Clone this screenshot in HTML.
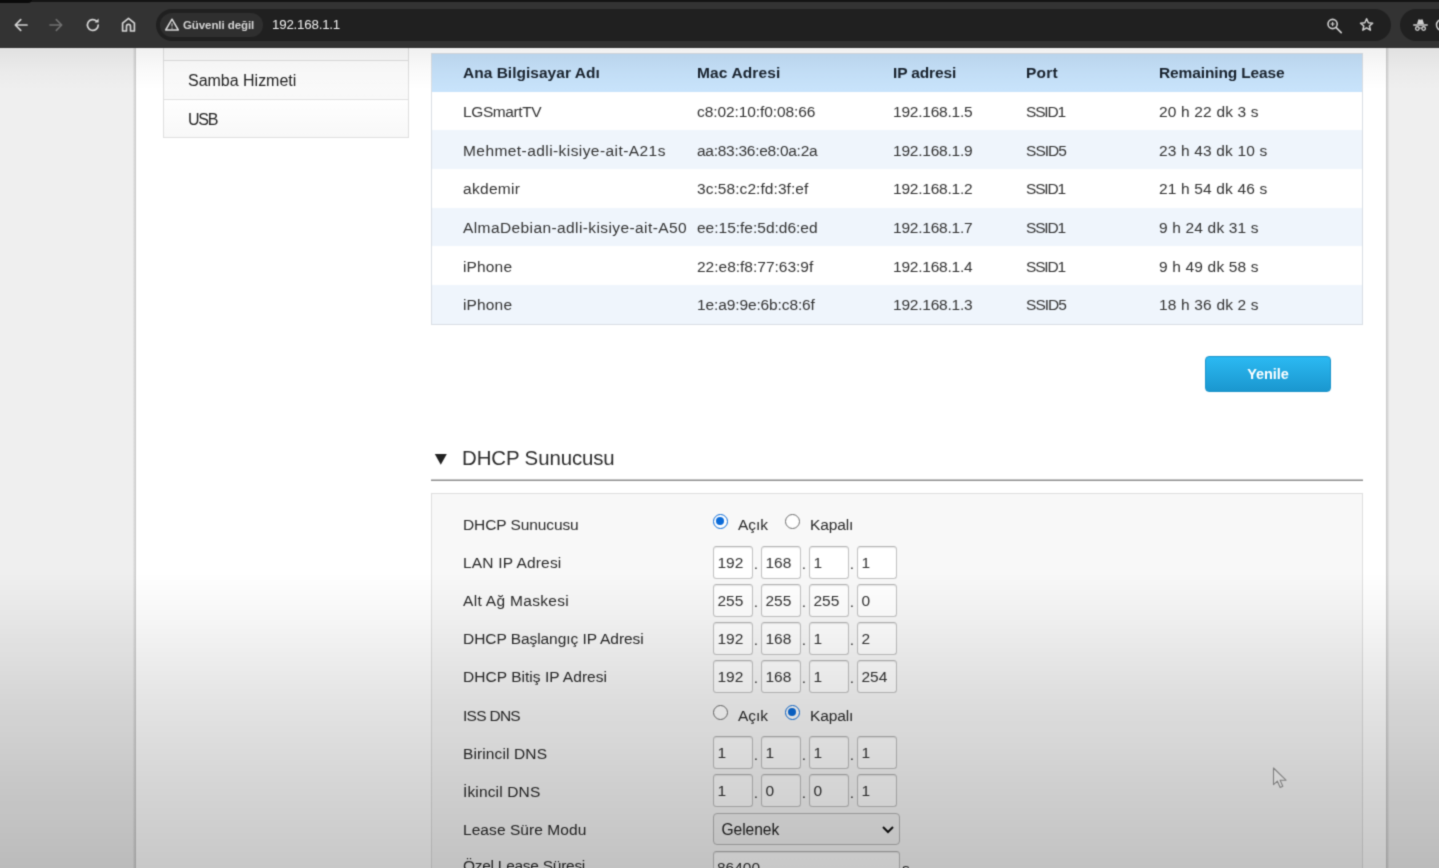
<!DOCTYPE html>
<html lang="tr">
<head>
<meta charset="utf-8">
<title>192.168.1.1</title>
<style>
*{box-sizing:border-box;margin:0;padding:0}
html,body{width:1439px;height:868px;overflow:hidden}
body{position:relative;background:#efefef;font-family:"Liberation Sans",sans-serif;color:#333;font-size:15.5px}
.abs{position:absolute}
#w{position:absolute;left:0;top:0;width:1439px;height:868px;filter:url(#soft)}
/* browser chrome */
#chrome{left:-8px;top:-8px;width:1455px;height:56px;background:#333333}
#tabstrip{left:-8px;top:-8px;width:1455px;height:10px;background:#141414}
#urlbar{left:156px;top:9px;width:1235px;height:32px;border-radius:16px;background:#202020}
#chip{left:160px;top:13px;width:103px;height:24px;border-radius:12px;background:#2f2f2f}
#chiptxt{left:183px;top:18px;font-size:11.5px;font-weight:bold;color:#d4d4d4;white-space:nowrap;line-height:14px}
#url{left:272px;top:17px;font-size:13.3px;color:#f0f0f0;white-space:nowrap;line-height:16px}
#incog{left:1400px;top:9px;width:60px;height:32px;border-radius:16px;background:#202020}
/* page */
#page{left:-8px;top:48px;width:1455px;height:830px;background:#efefef}
#container{left:133px;top:48px;width:1256px;height:830px;background:#fff;border-left:3px solid transparent;border-right:3px solid transparent;border-image:linear-gradient(to right,#e9e9e9 0,#c6c6c6 3px,#fff 3px,#fff calc(100% - 3px),#c6c6c6 calc(100% - 3px),#e9e9e9 100%) 0 3 0 3}
#topsh{left:-8px;top:48px;width:1455px;height:42px;background:linear-gradient(rgba(0,0,0,.06),rgba(0,0,0,.02) 55%,rgba(0,0,0,0));pointer-events:none}
#side{left:163px;top:48px;width:246px;height:90px;border:1px solid #dfdfdf;border-top:none;background:#fbfbfb}
.sitem{position:absolute;left:0;width:244px;height:38px;border-top:1px solid #dfdfdf;font-size:16px;color:#222;line-height:40px;padding-left:24px;background:linear-gradient(#fefefe,#f8f8f8)}
/* table */
#tbl{left:431px;top:53px;width:932px;height:272px;border:1px solid #d9dee4;background:#fff}
.tr{position:absolute;left:0;width:930px;height:38.6px}
.tr span{position:absolute;top:1.4px;white-space:nowrap;line-height:38.6px}
.th{background:linear-gradient(#c3dff8,#c8e3fb);font-weight:bold;color:#19232e;height:37.6px!important}
.th span{top:-0.4px!important;line-height:37.6px!important}
.alt{background:#eff5fc}
.c1{left:31px}.c2{left:265px}.c3{left:461px}.c4{left:594px}.c5{left:727px}
#btn{left:1205px;top:356px;width:126px;height:36px;border-radius:4px;background:linear-gradient(#2bb9f2,#1a97cf);border:1px solid #1a94cb;color:#fff;font-weight:bold;font-size:14.5px;text-align:center;line-height:34px}
#tri{left:434px;top:453px}
#h2{left:462px;top:444.5px;font-size:20.4px;color:#2c2c2c;line-height:26px;white-space:nowrap}
#sep{left:431px;top:479px;width:932px;height:2px;background:linear-gradient(#c4c4c4 50%,#8e8e8e 50%)}
#form{left:431px;top:493px;width:932px;height:400px;border:1px solid #dedede;background:#f8f8f8}
.lbl{position:absolute;left:463px;white-space:nowrap;line-height:20px;color:#2a2a2a}
.ip{position:absolute;width:40px;height:33px;border:1px solid #c2c2c2;border-top-color:#b4b4b4;border-radius:3.5px;background:#fff;box-shadow:inset 0 1px 1px rgba(0,0,0,.09);padding-left:3.5px;line-height:31px;color:#333}
.dot{position:absolute;width:6px;text-align:center;line-height:20px}
.radio{position:absolute;width:15px;height:15px;border-radius:50%;border:1.3px solid #6e6e6e;background:#fff}
.radio.on{border-color:#0b6bd8}
.radio.on::after{content:"";position:absolute;left:2.2px;top:2.2px;width:8px;height:8px;border-radius:50%;background:#0b6bd8}
.rl{position:absolute;white-space:nowrap;line-height:20px;color:#2a2a2a}
#sel{left:713px;top:813px;width:187px;height:32px;border:1px solid #b9b9b9;border-radius:4px;background:#f4f4f4;padding-left:7.5px;line-height:31.5px;font-size:15.6px;color:#222}
#inp{left:713px;top:851px;width:187px;height:33px;border:1px solid #c2c2c2;border-top-color:#b4b4b4;border-radius:3.5px;background:#fff;box-shadow:inset 0 1px 1px rgba(0,0,0,.09);padding-left:3px;line-height:31px}
#ov{left:-8px;top:572px;width:1455px;height:306px;background:linear-gradient(to bottom,rgba(0,0,0,0) 0px,rgba(0,0,0,.03) 41px,rgba(0,0,0,.10) 124px,rgba(0,0,0,.16) 207px,rgba(0,0,0,.215) 296px,rgba(0,0,0,.22) 306px);pointer-events:none}
</style>
</head>
<body>
<svg width="0" height="0" style="position:absolute"><defs><filter id="soft" x="0" y="0" width="100%" height="100%" color-interpolation-filters="sRGB"><feConvolveMatrix order="3" kernelMatrix="1 4 1 4 16 4 1 4 1" divisor="36" edgeMode="duplicate" preserveAlpha="true"/></filter></defs></svg>
<div id="w">
<div id="page" class="abs"></div>
<div id="container" class="abs"></div>

<div id="side" class="abs">
  <div class="sitem" style="top:12px;letter-spacing:-0.015px">Samba Hizmeti</div>
  <div class="sitem" style="top:51px;letter-spacing:-1.200px">USB</div>
</div>

<div id="tbl" class="abs">
  <div class="tr th" style="top:0"><span class="c1" style="letter-spacing:0.018px">Ana Bilgisayar Adı</span><span class="c2" style="letter-spacing:0.131px">Mac Adresi</span><span class="c3" style="letter-spacing:-0.143px">IP adresi</span><span class="c4" style="letter-spacing:0.233px">Port</span><span class="c5" style="letter-spacing:-0.129px">Remaining Lease</span></div>
  <div class="tr" style="top:37.6px;height:38.7px"><span class="c1" style="letter-spacing:-0.391px">LGSmartTV</span><span class="c2" style="letter-spacing:-0.087px">c8:02:10:f0:08:66</span><span class="c3" style="letter-spacing:-0.219px">192.168.1.5</span><span class="c4" style="letter-spacing:-1.178px">SSID1</span><span class="c5" style="letter-spacing:0.171px">20 h 22 dk 3 s</span></div>
  <div class="tr alt" style="top:76.3px;height:38.7px"><span class="c1" style="letter-spacing:0.429px">Mehmet-adli-kisiye-ait-A21s</span><span class="c2" style="letter-spacing:-0.274px">aa:83:36:e8:0a:2a</span><span class="c3" style="letter-spacing:-0.219px">192.168.1.9</span><span class="c4" style="letter-spacing:-0.953px">SSID5</span><span class="c5" style="letter-spacing:0.164px">23 h 43 dk 10 s</span></div>
  <div class="tr" style="top:115.0px;height:38.7px"><span class="c1" style="letter-spacing:0.310px">akdemir</span><span class="c2" style="letter-spacing:0.063px">3c:58:c2:fd:3f:ef</span><span class="c3" style="letter-spacing:-0.219px">192.168.1.2</span><span class="c4" style="letter-spacing:-1.178px">SSID1</span><span class="c5" style="letter-spacing:0.164px">21 h 54 dk 46 s</span></div>
  <div class="tr alt" style="top:153.7px;height:38.7px"><span class="c1" style="letter-spacing:0.403px">AlmaDebian-adli-kisiye-ait-A50</span><span class="c2" style="letter-spacing:-0.004px">ee:15:fe:5d:d6:ed</span><span class="c3" style="letter-spacing:-0.219px">192.168.1.7</span><span class="c4" style="letter-spacing:-1.178px">SSID1</span><span class="c5" style="letter-spacing:0.171px">9 h 24 dk 31 s</span></div>
  <div class="tr" style="top:192.4px;height:38.7px"><span class="c1" style="letter-spacing:0.147px">iPhone</span><span class="c2" style="letter-spacing:-0.004px">22:e8:f8:77:63:9f</span><span class="c3" style="letter-spacing:-0.219px">192.168.1.4</span><span class="c4" style="letter-spacing:-1.178px">SSID1</span><span class="c5" style="letter-spacing:0.171px">9 h 49 dk 58 s</span></div>
  <div class="tr alt" style="top:231.1px;height:38.7px"><span class="c1" style="letter-spacing:0.147px">iPhone</span><span class="c2" style="letter-spacing:-0.119px">1e:a9:9e:6b:c8:6f</span><span class="c3" style="letter-spacing:-0.219px">192.168.1.3</span><span class="c4" style="letter-spacing:-0.953px">SSID5</span><span class="c5" style="letter-spacing:0.171px">18 h 36 dk 2 s</span></div>
</div>

<div id="btn" class="abs" style="letter-spacing:-0.044px">Yenile</div>

<svg id="tri" class="abs" width="14" height="13" viewBox="0 0 14 13"><path d="M0.8 1h12l-6 10.800z" fill="#222"/></svg>
<div id="h2" class="abs" style="letter-spacing:-0.090px">DHCP Sunucusu</div>
<div id="sep" class="abs"></div>
<div id="form" class="abs"></div>
<div class="lbl" style="top:515.0px;letter-spacing:-0.099px">DHCP Sunucusu</div>
<div class="radio on" style="left:713px;top:514.0px"></div>
<div class="rl" style="left:738px;top:515.0px;letter-spacing:-0.052px">Açık</div>
<div class="radio" style="left:785px;top:514.0px"></div>
<div class="rl" style="left:810px;top:515.0px;letter-spacing:-0.131px">Kapalı</div>
<div class="lbl" style="top:553.1px;letter-spacing:0.173px">LAN IP Adresi</div>
<div class="ip" style="left:713px;top:545.6px">192</div>
<div class="dot" style="left:753px;top:554.1px">.</div>
<div class="ip" style="left:761px;top:545.6px">168</div>
<div class="dot" style="left:801px;top:554.1px">.</div>
<div class="ip" style="left:809px;top:545.6px">1</div>
<div class="dot" style="left:849px;top:554.1px">.</div>
<div class="ip" style="left:857px;top:545.6px">1</div>
<div class="lbl" style="top:591.2px;letter-spacing:0.311px">Alt Ağ Maskesi</div>
<div class="ip" style="left:713px;top:583.7px">255</div>
<div class="dot" style="left:753px;top:592.2px">.</div>
<div class="ip" style="left:761px;top:583.7px">255</div>
<div class="dot" style="left:801px;top:592.2px">.</div>
<div class="ip" style="left:809px;top:583.7px">255</div>
<div class="dot" style="left:849px;top:592.2px">.</div>
<div class="ip" style="left:857px;top:583.7px">0</div>
<div class="lbl" style="top:629.3px;letter-spacing:-0.060px">DHCP Başlangıç IP Adresi</div>
<div class="ip" style="left:713px;top:621.8px">192</div>
<div class="dot" style="left:753px;top:630.3px">.</div>
<div class="ip" style="left:761px;top:621.8px">168</div>
<div class="dot" style="left:801px;top:630.3px">.</div>
<div class="ip" style="left:809px;top:621.8px">1</div>
<div class="dot" style="left:849px;top:630.3px">.</div>
<div class="ip" style="left:857px;top:621.8px">2</div>
<div class="lbl" style="top:667.4px;letter-spacing:0.037px">DHCP Bitiş IP Adresi</div>
<div class="ip" style="left:713px;top:659.9px">192</div>
<div class="dot" style="left:753px;top:668.4px">.</div>
<div class="ip" style="left:761px;top:659.9px">168</div>
<div class="dot" style="left:801px;top:668.4px">.</div>
<div class="ip" style="left:809px;top:659.9px">1</div>
<div class="dot" style="left:849px;top:668.4px">.</div>
<div class="ip" style="left:857px;top:659.9px">254</div>
<div class="lbl" style="top:705.5px;letter-spacing:-0.719px">ISS DNS</div>
<div class="radio" style="left:713px;top:704.5px"></div>
<div class="rl" style="left:738px;top:705.5px;letter-spacing:-0.052px">Açık</div>
<div class="radio on" style="left:785px;top:704.5px"></div>
<div class="rl" style="left:810px;top:705.5px;letter-spacing:-0.131px">Kapalı</div>
<div class="lbl" style="top:743.6px;letter-spacing:0.119px">Birincil DNS</div>
<div class="ip" style="left:713px;top:736.1px">1</div>
<div class="dot" style="left:753px;top:744.6px">.</div>
<div class="ip" style="left:761px;top:736.1px">1</div>
<div class="dot" style="left:801px;top:744.6px">.</div>
<div class="ip" style="left:809px;top:736.1px">1</div>
<div class="dot" style="left:849px;top:744.6px">.</div>
<div class="ip" style="left:857px;top:736.1px">1</div>
<div class="lbl" style="top:781.7px;letter-spacing:0.150px">İkincil DNS</div>
<div class="ip" style="left:713px;top:774.2px">1</div>
<div class="dot" style="left:753px;top:782.7px">.</div>
<div class="ip" style="left:761px;top:774.2px">0</div>
<div class="dot" style="left:801px;top:782.7px">.</div>
<div class="ip" style="left:809px;top:774.2px">0</div>
<div class="dot" style="left:849px;top:782.7px">.</div>
<div class="ip" style="left:857px;top:774.2px">1</div>
<div class="lbl" style="top:819.8px;letter-spacing:0.067px">Lease Süre Modu</div>
<div id="sel" class="abs"><span style="letter-spacing:-0.066px">Gelenek</span><svg class="abs" style="right:5px;top:11.5px" width="12" height="8" viewBox="0 0 12 8"><path d="M1 1l5 5 5-5" fill="none" stroke="#111" stroke-width="2"/></svg></div>
<div class="lbl" style="top:856.4px;letter-spacing:-0.272px">Özel Lease Süresi</div>
<div id="inp" class="abs">86400</div>
<div class="rl" style="left:902px;top:858.9px">s</div>

<svg class="abs" style="left:1268px;top:762px" width="24" height="30" viewBox="0 0 24 30"><path d="M5.500 6V22.600L9.400 19.200 12.200 25.500 14.800 24.300 12.100 18.200H18z" fill="#fdfdfd" stroke="#999" stroke-width="1.100" stroke-linejoin="round"/></svg>
<div id="topsh" class="abs"></div>
<div id="ov" class="abs"></div>

<div id="chrome" class="abs"></div>
<div id="tabstrip" class="abs"></div>
<div class="abs" style="left:-8px;top:-8px;width:40px;height:11px;background:#0a0a0a;border-radius:0 0 4px 0"></div>
<div id="urlbar" class="abs"></div>
<div id="chip" class="abs"></div>
<div id="chiptxt" class="abs" style="letter-spacing:-0.085px">Güvenli değil</div>
<div id="url" class="abs" style="letter-spacing:-0.199px">192.168.1.1</div>
<div id="incog" class="abs"></div>
<svg class="abs" style="left:12px;top:16px" width="18" height="18" viewBox="0 0 18 18"><path d="M15 9H3.5M8.7 3.6L3.3 9l5.4 5.4" fill="none" stroke="#d4d4d4" stroke-width="1.7" stroke-linecap="round" stroke-linejoin="round"/></svg>
<svg class="abs" style="left:47px;top:16px" width="18" height="18" viewBox="0 0 18 18"><path d="M3 9h11.5M9.3 3.6L14.7 9l-5.4 5.4" fill="none" stroke="#707070" stroke-width="1.6" stroke-linecap="round" stroke-linejoin="round"/></svg>
<svg class="abs" style="left:84px;top:16px" width="18" height="18" viewBox="0 0 18 18"><path d="M14.2 9a5.4 5.4 0 1 1-1.7-3.9" fill="none" stroke="#d4d4d4" stroke-width="1.7" stroke-linecap="round"/><path d="M14.6 2.6v4h-4z" fill="#d4d4d4"/></svg>
<svg class="abs" style="left:119px;top:15px" width="19" height="19" viewBox="0 0 19 19"><path d="M3.6 16V8.2L9.5 3.4l5.9 4.8V16h-3.9v-4.6a2 2 0 0 0-4 0V16z" fill="none" stroke="#d4d4d4" stroke-width="1.7" stroke-linejoin="round"/></svg>
<svg class="abs" style="left:164px;top:17px" width="16" height="15" viewBox="0 0 16 15"><path d="M8 2.2L14.3 13H1.7z" fill="none" stroke="#d8d8d8" stroke-width="1.5" stroke-linejoin="round"/><path d="M8 6.3v3.3M8 10.6v1.2" stroke="#bdbdbd" stroke-width="1.2"/></svg>
<svg class="abs" style="left:1325px;top:15.500px" width="19" height="19" viewBox="0 0 19 19"><circle cx="7.6" cy="8" r="4.6" fill="none" stroke="#cfcfcf" stroke-width="1.6"/><path d="M11.2 11.6l5 5" stroke="#cfcfcf" stroke-width="1.7" stroke-linecap="round"/><path d="M7.6 6v4M5.6 8h4" stroke="#cfcfcf" stroke-width="1.2"/></svg>
<svg class="abs" style="left:1357px;top:15px" width="19" height="19" viewBox="0 0 19 19"><path d="M9.600 3.800l1.750 3.950 4.300.400-3.250 2.850 1 4.200-3.800-2.250-3.800 2.250 1-4.200-3.250-2.850 4.300-.400z" fill="none" stroke="#cfcfcf" stroke-width="1.500" stroke-linejoin="round"/></svg>
<svg class="abs" style="left:1411.500px;top:16px" width="17" height="17" viewBox="0 0 19 19"><path d="M5.600 9l1.300-4.600c.2-.6.700-.8 1.200-.6l1.400.5 1.400-.5c.5-.2 1 0 1.200.6L13.400 9z" fill="#cfcfcf"/><path d="M2 10h15" stroke="#cfcfcf" stroke-width="1.700" stroke-linecap="round"/><circle cx="6" cy="14" r="2" fill="none" stroke="#cfcfcf" stroke-width="1.500"/><circle cx="13" cy="14" r="2" fill="none" stroke="#cfcfcf" stroke-width="1.500"/><path d="M8 13.800q1.500-.8 3 0" fill="none" stroke="#cfcfcf" stroke-width="1.200"/></svg>
<svg class="abs" style="left:1435px;top:18px" width="8" height="14" viewBox="0 0 8 14"><circle cx="7" cy="7" r="5.500" fill="none" stroke="#cfcfcf" stroke-width="1.500"/></svg>

</div>
</body>
</html>
